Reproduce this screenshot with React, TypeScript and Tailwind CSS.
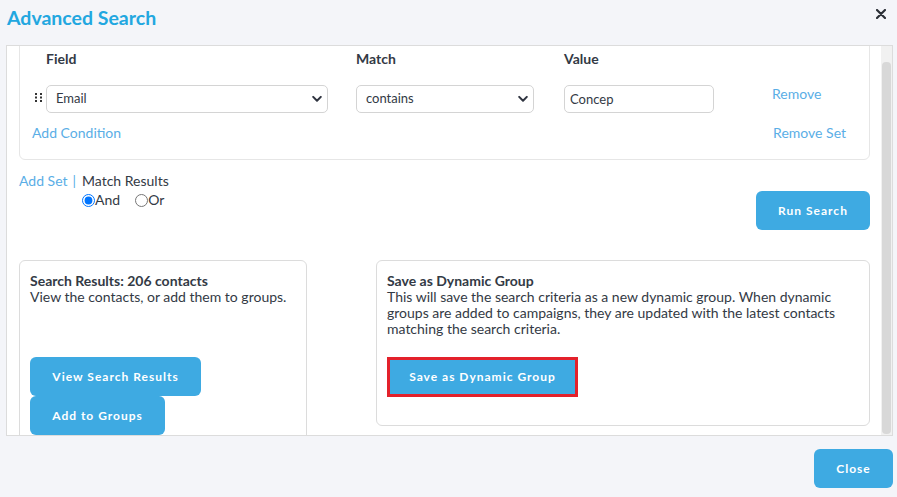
import { useState } from 'react'

const btn =
  'bg-[#3eaae2] text-white font-bold text-[12px] tracking-[1px] rounded-[6px] h-[39px] flex items-center justify-center'

function Chevron() {
  return (
    <svg width="10" height="7" viewBox="0 0 10 7" className="absolute right-[6px] top-1/2 -translate-y-1/2 pointer-events-none">
      <path d="M1.2 1.4 L5 5.2 L8.8 1.4" fill="none" stroke="#2f3440" strokeWidth="2" strokeLinecap="round" strokeLinejoin="round" />
    </svg>
  )
}

function FakeSelect({ value, options, width }: { value: string; options: string[]; width: string }) {
  const [v, setV] = useState(value)
  return (
    <div className={`relative ${width}`}>
      <select
        value={v}
        onChange={e => setV(e.target.value)}
        className="appearance-none w-full h-[28px] border border-[#d4d4d4] rounded-[5px] bg-white pl-[9px] pr-[20px] text-[13px] text-[#333a45] outline-none"
      >
        {options.map(o => (
          <option key={o}>{o}</option>
        ))}
      </select>
      <Chevron />
    </div>
  )
}

function DragHandle() {
  return (
    <svg width="8" height="9" viewBox="0 0 8 9" className="mt-[8px] ml-[3px]">
      {[0, 3.5, 7].map(y => (
        <g key={y}>
          <rect x="0" y={y} width="2" height="2" fill="#333" />
          <rect x="5" y={y} width="2" height="2" fill="#333" />
        </g>
      ))}
    </svg>
  )
}

export default function App() {
  const [match, setMatch] = useState<'and' | 'or'>('and')
  const [value, setValue] = useState('Concep')

  return (
    <div className="w-[897px] h-[497px] bg-[#f4f5f9] font-['Lato',sans-serif] text-[#333a45] overflow-hidden">
      {/* Header */}
      <div className="h-[45px] flex items-center justify-between pl-[7px] pr-[11px]">
        <h1 className="text-[19.5px] font-bold text-[#22a7e0] leading-none -mt-[9px]">Advanced Search</h1>
        <svg width="10" height="10" viewBox="0 0 10 10" className="-mt-[17px]">
          <path d="M1 1 L9 9 M9 1 L1 9" stroke="#2b2f36" strokeWidth="2.2" strokeLinecap="round" />
        </svg>
      </div>

      {/* Scroll panel */}
      <div className="ml-[6px] w-[887px] h-[391px] border border-[#dcdcdc] bg-white flex overflow-hidden">
        <div className="w-[874px] overflow-hidden pl-[12px] pr-[11px]">
          {/* Condition set */}
          <div className="-mt-[10px] border border-[#e6e6e6] rounded-[6px] pt-[14px] pl-[12px] pb-[18px]">
            <div className="grid grid-cols-[14px_310px_208px_208px_1fr] text-[14px] leading-[16px] font-bold text-[#333a45]">
              <div />
              <div>Field</div>
              <div>Match</div>
              <div>Value</div>
              <div />
            </div>
            <div className="grid grid-cols-[14px_310px_208px_208px_1fr] mt-[18px] items-start">
              <DragHandle />
              <FakeSelect value="Email" options={['Email', 'First Name', 'Last Name']} width="w-[282px]" />
              <FakeSelect value="contains" options={['contains', 'equals', 'starts with']} width="w-[178px]" />
              <input
                value={value}
                onChange={e => setValue(e.target.value)}
                className="w-[150px] h-[28px] border border-[#d4d4d4] rounded-[5px] pl-[5px] text-[13px] text-[#333a45] outline-none"
              />
              <a className="mt-[1px] text-[14px] leading-[16px] text-[#5aaee6] cursor-pointer">Remove</a>
            </div>
            <div className="mt-[12px] flex justify-between pr-[23px] text-[14px] leading-[16px] text-[#5aaee6]">
              <a className="cursor-pointer">Add Condition</a>
              <a className="cursor-pointer">Remove Set</a>
            </div>
          </div>

          {/* Set controls */}
          <div className="mt-[13px] flex justify-between items-start">
            <div className="flex text-[14px] leading-[16px]">
              <a className="text-[#5aaee6] cursor-pointer">Add Set</a>
              <span className="text-[#5aaee6] ml-[5px] mr-[6px]">|</span>
              <div>
                <div>Match Results</div>
                <div className="mt-[3px] flex items-center">
                  <label className="flex items-center">
                    <input type="radio" name="match" checked={match === 'and'} onChange={() => setMatch('and')} className="m-0 w-[13px] h-[13px]" />
                    <span>And</span>
                  </label>
                  <label className="flex items-center ml-[15px]">
                    <input type="radio" name="match" checked={match === 'or'} onChange={() => setMatch('or')} className="m-0 w-[13px] h-[13px]" />
                    <span>Or</span>
                  </label>
                </div>
              </div>
            </div>
            <button className={`${btn} mt-[18px] w-[114px]`}>Run Search</button>
          </div>

          {/* Result cards */}
          <div className="mt-[30px] flex justify-between items-start">
            <div className="w-[288px] h-[230px] border border-[#dcdcdc] rounded-[6px] pt-[11px] px-[10px] text-[14px]">
              <div className="font-bold leading-[17px]">Search Results: 206 contacts</div>
              <div className="leading-[16px]">View the contacts, or add them to groups.</div>
              <div className="mt-[52px] flex flex-col items-start">
                <button className={`${btn} w-[171px]`}>View Search Results</button>
                <button className={`${btn} w-[135px]`}>Add to Groups</button>
              </div>
            </div>
            <div className="w-[494px] border border-[#dcdcdc] rounded-[6px] pt-[11px] px-[10px] pb-[28px] text-[14px]">
              <div className="font-bold leading-[17px]">Save as Dynamic Group</div>
              <div className="leading-[16px] whitespace-nowrap">
                This will save the search criteria as a new dynamic group. When dynamic
                <br />
                groups are added to campaigns, they are updated with the latest contacts
                <br />
                matching the search criteria.
              </div>
              <div className="mt-[20px] inline-block border-[3px] border-[#e3212b]">
                <button className="bg-[#3eaae2] text-white font-bold text-[12px] tracking-[1px] w-[185px] h-[34px] flex items-center justify-center">
                  Save as Dynamic Group
                </button>
              </div>
            </div>
          </div>
        </div>

        {/* Scrollbar */}
        <div className="w-[11px] bg-[#f1f1f1] flex flex-col">
          <div className="mt-[16px] mx-[1px] h-[372px] rounded-[4px] bg-[#d8d8d8]" />
        </div>
      </div>

      {/* Footer */}
      <div className="mt-[13px] flex justify-end pr-[4px]">
        <button className={`${btn} w-[79px]`}>Close</button>
      </div>
    </div>
  )
}
